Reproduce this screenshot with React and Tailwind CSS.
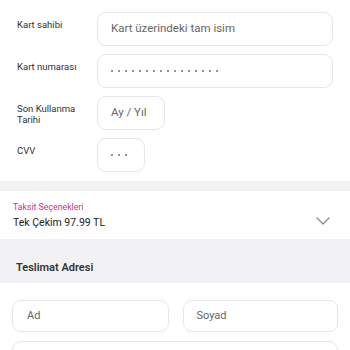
import { ChevronDown } from "lucide-react";

function Dots({ count }) {
  return (
    <div className="flex gap-[5px]">
      {Array.from({ length: count }).map((_, i) => (
        <span key={i} className="w-[2px] h-[2px] rounded-full bg-[#6f6f6f]"></span>
      ))}
    </div>
  );
}

function CardRow({ label, width, children }) {
  return (
    <div className="flex">
      <div className="w-[80px] pt-[7px] pr-2 text-[9.5px] leading-[11px] text-[#333]">{label}</div>
      <div className={`${width} h-[34px] rounded-[9px] border border-[#e6e6e6] flex items-center pl-[13px] text-[11.5px] text-[#666]`}>
        {children}
      </div>
    </div>
  );
}

export default function App() {
  return (
    <div className="w-[350px] h-[350px] overflow-hidden bg-white" style={{ fontFamily: "Roboto, 'Noto Sans', sans-serif" }}>
      {/* Card details */}
      <div className="pl-[17px] pr-[17px] pt-[12px] pb-[9px] flex flex-col gap-[8px]">
        <CardRow label="Kart sahibi" width="flex-1">Kart üzerindeki tam isim</CardRow>
        <CardRow label="Kart numarası" width="flex-1"><Dots count={16} /></CardRow>
        <CardRow label={<>Son Kullanma<br />Tarihi</>} width="w-[68px]">Ay / Yıl</CardRow>
        <CardRow label="CVV" width="w-[48px]"><Dots count={3} /></CardRow>
      </div>

      <div className="h-[10px] bg-[#f2f2f4]"></div>

      {/* Installments */}
      <div className="h-[48px] px-[13px] flex items-center justify-between">
        <div className="flex flex-col pt-[1px]">
          <span className="text-[8.75px] leading-[11px] text-[#cf2e90]">Taksit Seçenekleri</span>
          <span className="text-[10.5px] leading-[15px] text-[#222] mt-[2px]">Tek Çekim 97.99 TL</span>
        </div>
        <ChevronDown className="w-[24px] h-[24px] text-[#888] mr-[2px] mt-[11px]" strokeWidth={1.2} />
      </div>

      {/* Delivery address */}
      <div className="h-[44px] bg-[#f2f2f4] px-[16px] flex items-end pb-[7px]">
        <span className="text-[11px] font-semibold text-[#333]">Teslimat Adresi</span>
      </div>

      <div className="px-[12px] pt-[17px] flex flex-col gap-[9px]">
        <div className="flex gap-[14px]">
          <div className="flex-1 h-[32px] rounded-[9px] border border-[#e6e6e6] flex items-center pl-[14px] text-[11px] text-[#666]">Ad</div>
          <div className="flex-1 h-[32px] rounded-[9px] border border-[#e6e6e6] flex items-center pl-[13px] text-[11px] text-[#666]">Soyad</div>
        </div>
        <div className="h-[33px] rounded-[9px] border border-[#e6e6e6]"></div>
      </div>
    </div>
  );
}
